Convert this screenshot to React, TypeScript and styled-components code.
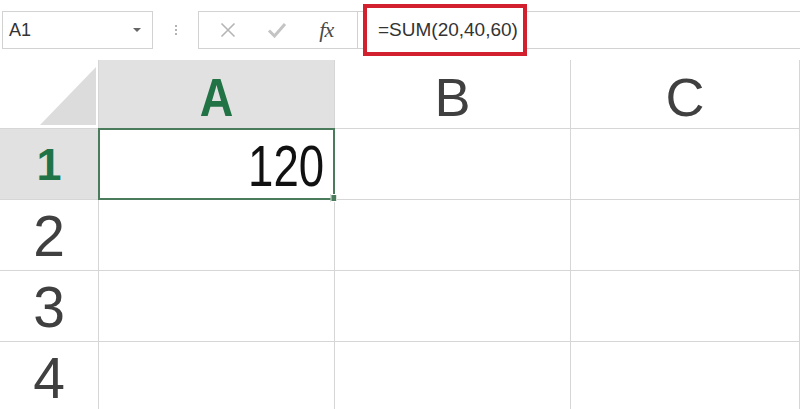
import React from "react";
import styled, { createGlobalStyle } from "styled-components";

const Global = createGlobalStyle`
  html, body { margin: 0; padding: 0; background: #ffffff; }
  body { font-family: "Liberation Sans", Arial, sans-serif; overflow: hidden; }
`;

const Page = styled.div`
  width: 800px;
  height: 409px;
  display: flex;
  flex-direction: column;
  overflow: hidden;
  background: #fff;
`;

const Toolbar = styled.div`
  height: 60px;
  display: flex;
  align-items: center;
  flex-shrink: 0;
`;

const NameBox = styled.div`
  margin-left: 2px;
  width: 151px;
  height: 38px;
  box-sizing: border-box;
  border: 1px solid #d2d2d2;
  display: flex;
  align-items: center;
  justify-content: space-between;
  padding: 0 11px 0 6px;
  font-size: 18px;
  color: #333;
`;

const DropArrow = styled.span`
  width: 0;
  height: 0;
  border-left: 4px solid transparent;
  border-right: 4px solid transparent;
  border-top: 4px solid #666;
`;

const DotsHolder = styled.div`
  width: 45px;
  display: flex;
  justify-content: center;
`;

const Dots = styled.div`
  display: flex;
  flex-direction: column;
  gap: 2px;
  & > span {
    width: 2px;
    height: 2px;
    background: #9a9a9a;
    border-radius: 1px;
  }
`;

const ButtonGroup = styled.div`
  width: 160px;
  height: 38px;
  box-sizing: border-box;
  border: 1px solid #d2d2d2;
  display: flex;
  align-items: center;
  justify-content: space-around;
  padding: 0 6px 0 4px;
`;

const IconSlot = styled.span`
  width: 24px;
  display: flex;
  justify-content: center;
  align-items: center;
`;

const Fx = styled.span`
  font-family: "Liberation Serif", "Times New Roman", serif;
  font-style: italic;
  font-size: 22px;
  color: #4a4a4a;
  letter-spacing: -1px;
`;

const FormulaBar = styled.div`
  flex: 1;
  height: 38px;
  box-sizing: border-box;
  border-top: 1px solid #d2d2d2;
  border-bottom: 1px solid #d2d2d2;
  display: flex;
  align-items: center;
`;

const Highlight = styled.div`
  margin-left: 5px;
  width: 164px;
  height: 52px;
  box-sizing: border-box;
  border: 4px solid #d2202e;
  background: #fff;
  display: flex;
  align-items: center;
  padding-left: 11px;
  font-size: 19px;
  color: #333;
  white-space: nowrap;
`;

const Sheet = styled.div`
  display: grid;
  grid-template-columns: 99px 236px 236px 1fr;
  grid-template-rows: 69px repeat(4, 71px);
`;

const Corner = styled.div`
  border-right: 1px solid #d6d6d6;
  border-bottom: 1px solid #d6d6d6;
  display: flex;
  align-items: flex-end;
  justify-content: flex-end;
  padding: 0 2px 3px 0;
`;

const ColHead = styled.div<{ $active?: boolean }>`
  background: ${(p) => (p.$active ? "#e1e1e1" : "#ffffff")};
  border-right: 1px solid #d6d6d6;
  border-bottom: 1px solid #d6d6d6;
  display: flex;
  align-items: center;
  justify-content: center;
  padding-top: 6px;
  box-sizing: border-box;
  font-size: 54px;
  font-weight: ${(p) => (p.$active ? 700 : 400)};
  color: ${(p) => (p.$active ? "#217346" : "#404040")};
  & > span {
    display: inline-block;
    transform: scaleX(${(p) => (p.$active ? 0.86 : 1)});
  }
`;

const RowHead = styled.div<{ $active?: boolean }>`
  background: ${(p) => (p.$active ? "#e1e1e1" : "#ffffff")};
  border-right: 1px solid #d6d6d6;
  border-bottom: 1px solid #d6d6d6;
  display: flex;
  align-items: center;
  justify-content: center;
  font-size: ${(p) => (p.$active ? "45px" : "57px")};
  font-weight: ${(p) => (p.$active ? 700 : 400)};
  color: ${(p) => (p.$active ? "#217346" : "#404040")};
  padding-top: 2px;
  box-sizing: border-box;
`;

const Cell = styled.div<{ $selected?: boolean }>`
  position: relative;
  border-right: 1px solid #d6d6d6;
  border-bottom: 1px solid #d6d6d6;
  box-sizing: border-box;
  display: flex;
  align-items: center;
  justify-content: flex-end;
  padding-right: 9px;
  padding-top: 3px;
  font-size: 57px;
  color: #111;
  ${(p) =>
    p.$selected
      ? `
    margin: -1px 0 0 -1px;
    border: 2px solid #4a7c5c;
    z-index: 1;
  `
      : ""}
  & > span {
    display: inline-block;
    transform: scaleX(0.8);
    transform-origin: right center;
  }
`;

const Handle = styled.span`
  position: absolute;
  right: -4px;
  bottom: -4px;
  width: 6px;
  height: 6px;
  background: #4a7c5c;
  border: 1px solid #fff;
`;

export default function App() {
  const rows = [1, 2, 3, 4];
  return (
    <Page>
      <Global />
      <Toolbar>
        <NameBox>
          <span>A1</span>
          <DropArrow />
        </NameBox>
        <DotsHolder>
          <Dots>
            <span />
            <span />
            <span />
          </Dots>
        </DotsHolder>
        <ButtonGroup>
          <IconSlot>
            <svg width="16" height="16" viewBox="0 0 16 16">
              <path d="M1.5 1.5 L14.5 14.5 M14.5 1.5 L1.5 14.5" stroke="#b5b5b5" strokeWidth="1.6" fill="none" />
            </svg>
          </IconSlot>
          <IconSlot>
            <svg width="20" height="16" viewBox="0 0 20 16">
              <path d="M2 8.5 L7.5 14 L18 2" stroke="#c4c4c4" strokeWidth="3" fill="none" />
            </svg>
          </IconSlot>
          <IconSlot>
            <Fx>fx</Fx>
          </IconSlot>
        </ButtonGroup>
        <FormulaBar>
          <Highlight>=SUM(20,40,60)</Highlight>
        </FormulaBar>
      </Toolbar>
      <Sheet>
        <Corner>
          <svg width="56" height="58" viewBox="0 0 56 58">
            <polygon points="0,58 56,0 56,58" fill="#dcdcdc" />
          </svg>
        </Corner>
        <ColHead $active>
          <span>A</span>
        </ColHead>
        <ColHead>
          <span>B</span>
        </ColHead>
        <ColHead>
          <span>C</span>
        </ColHead>
        {rows.map((r) => (
          <React.Fragment key={r}>
            <RowHead $active={r === 1}>{r}</RowHead>
            <Cell $selected={r === 1}>
              {r === 1 && <span>120</span>}
              {r === 1 && <Handle />}
            </Cell>
            <Cell />
            <Cell />
          </React.Fragment>
        ))}
      </Sheet>
    </Page>
  );
}
